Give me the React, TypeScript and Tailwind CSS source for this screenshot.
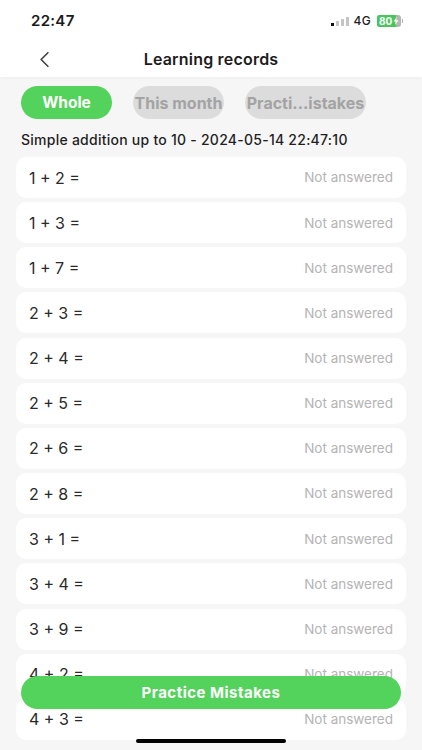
import { ChevronLeft } from "lucide-react";

const QUESTIONS = [
  "1 + 2 =",
  "1 + 3 =",
  "1 + 7 =",
  "2 + 3 =",
  "2 + 4 =",
  "2 + 5 =",
  "2 + 6 =",
  "2 + 8 =",
  "3 + 1 =",
  "3 + 4 =",
  "3 + 9 =",
  "4 + 2 =",
  "4 + 3 =",
];

function StatusIcons() {
  return (
    <div className="flex items-center">
      <div className="flex items-end gap-[2px]">
        <span className="h-[3px] w-[3px] bg-[#111]" />
        <span className="h-[5px] w-[3px] rounded-[0.5px] bg-[#c4c4c4]" />
        <span className="h-[7px] w-[3px] rounded-[0.5px] bg-[#c4c4c4]" />
        <span className="h-[9px] w-[3px] rounded-[0.5px] bg-[#c4c4c4]" />
      </div>
      <span className="ml-[5px] text-[12px] font-medium tracking-[0.3px] text-[#222]">4G</span>
      <div className="relative ml-[6px] flex h-[12px] w-[24px] overflow-hidden rounded-[3px] bg-[#b5b5b5]">
        <div className="h-full w-[19px] bg-[#45c75e]" />
        <span className="absolute left-[2px] top-0 text-[10px] font-bold leading-[12px] text-white">80</span>
        <svg className="absolute right-[2px] top-[2px]" width="6" height="8" viewBox="0 0 6 8">
          <path d="M3.6 0 0.6 4.6H2.6L2.2 8 5.4 3.3H3.3Z" fill="#fff" />
        </svg>
      </div>
      <span className="ml-[1px] h-[4px] w-[1px] bg-[#b5b5b5]" />
    </div>
  );
}

export default function App() {
  return (
    <div className="relative h-[750px] w-[422px] overflow-hidden bg-[#f6f6f6] font-['Inter',sans-serif]">
      {/* Header */}
      <div className="h-[77px] bg-white shadow-[0_1px_4px_rgba(0,0,0,0.04)]">
        <div className="flex h-[41px] items-center justify-between pl-[31px] pr-[19px] pt-[1px]">
          <span className="text-[15px] font-semibold tracking-[0.3px] text-[#1a1a1a]">22:47</span>
          <StatusIcons />
        </div>
        <div className="relative flex h-[36px] items-center justify-center">
          <ChevronLeft className="absolute left-[31px] top-[5px] h-[27px] w-[27px] text-[#444]" strokeWidth={1.5} />
          <span className="pb-[1px] text-[16px] font-semibold tracking-[0.2px] text-[#1c1c1c]">Learning records</span>
        </div>
      </div>

      {/* Tabs */}
      <div className="mt-[9px] flex gap-[21px] pl-[21px]">
        <button className="flex h-[33px] w-[91px] items-center justify-center rounded-full bg-[#53d35c] text-[15.5px] font-bold text-white">
          Whole
        </button>
        <button className="flex h-[33px] w-[91px] items-center justify-center whitespace-nowrap rounded-full bg-[#dcdcdc] text-[16px] font-bold text-[#a3a3a3]">
          This month
        </button>
        <button className="flex h-[33px] w-[121px] items-center justify-center whitespace-nowrap rounded-full bg-[#dcdcdc] text-[16px] font-bold text-[#a3a3a3]">
          Practi...istakes
        </button>
      </div>

      <p className="mt-[12px] pl-[21px] text-[14px] font-medium leading-[18px] tracking-[0.25px] text-[#1f1f1f]">
        Simple addition up to 10 - 2024-05-14 22:47:10
      </p>

      {/* Records */}
      <div className="mt-[8px] flex flex-col gap-[4.17px] px-[16px]">
        {QUESTIONS.map((q) => (
          <div key={q} className="flex h-[41px] shrink-0 items-center justify-between rounded-[10px] bg-white pl-[13px] pr-[13px]">
            <span className="text-[16px] text-[#2a2a2a]">{q}</span>
            <span className="text-[13.5px] text-[#b4b4b4]">Not answered</span>
          </div>
        ))}
      </div>

      {/* Floating action */}
      <button className="absolute left-[21px] top-[676px] h-[33px] w-[380px] rounded-full bg-[#53d35c] pt-[1px] text-[15px] font-bold tracking-[0.5px] text-white">
        Practice Mistakes
      </button>

      <div className="absolute left-[136px] top-[739px] h-[4px] w-[150px] rounded-full bg-black" />
    </div>
  );
}
